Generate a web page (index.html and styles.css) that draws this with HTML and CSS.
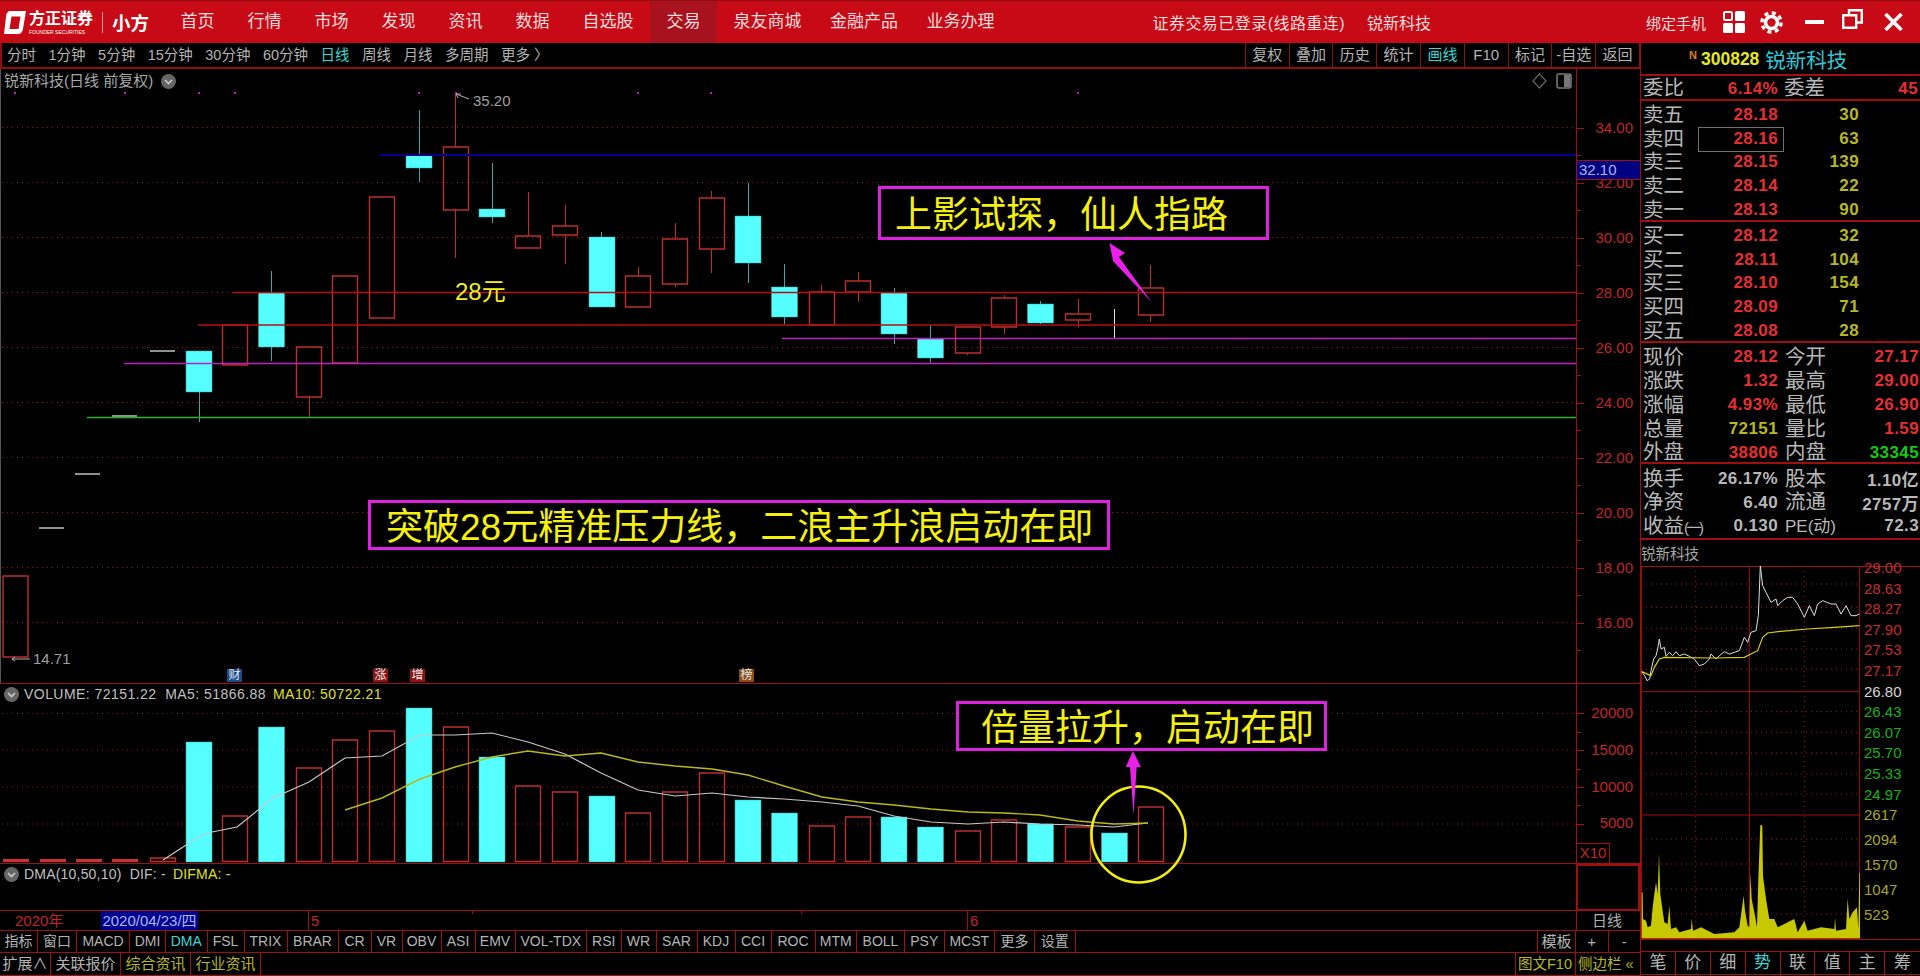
FILE: index.html
```html
<!DOCTYPE html>
<html>
<head>
	<meta charset="utf-8">
	<title>锐新科技</title>
	<link rel="stylesheet" href="styles.css">
</head>
<body>

<!-- title bar -->
<header class="titlebar">
	<div class="logo">
		<svg class="logo-mark" width="24" height="25" viewBox="0 0 24 25">
			<path fill="#fff" fill-rule="evenodd" d="M6 1H23L20 19Q19 24 15 24H1L3 7Q3 3 6 1ZM8.5 6.5L6.5 19H15.5L17.5 6.5Z"/>
		</svg>
		<div class="logo-name">
			<b>方正证券</b>
			<small>FOUNDER SECURITIES</small>
		</div>
		<i class="logo-sep"></i>
		<b class="logo-app">小方</b>
	</div>
	<nav class="menu">
		<a>首页</a><a>行情</a><a>市场</a><a>发现</a><a>资讯</a><a>数据</a><a>自选股</a><a class="on">交易</a><a>泉友商城</a><a class="tight">金融产品</a><a class="tight">业务办理</a>
	</nav>
	<span class="login">证券交易已登录(线路重连)</span>
	<span class="login-stock">锐新科技</span>
	<span class="bind">绑定手机</span>
	<svg class="win-icon grid-icon" width="22" height="22" viewBox="0 0 22 22">
		<rect x="1" y="1" width="8" height="8" rx="1.5" fill="none" stroke="#fff" stroke-width="2"/>
		<rect x="12" y="0" width="10" height="10" rx="1.5" fill="#fff"/>
		<rect x="0" y="12" width="10" height="10" rx="1.5" fill="#fff"/>
		<rect x="12" y="12" width="10" height="10" rx="1.5" fill="#fff"/>
	</svg>
	<svg class="win-icon gear-icon" width="23" height="23" viewBox="0 0 23 23">
		<circle cx="11.5" cy="11.5" r="6" fill="none" stroke="#fff" stroke-width="3.6"/>
		<circle cx="11.5" cy="11.5" r="9.6" fill="none" stroke="#fff" stroke-width="3.4" stroke-dasharray="4 3.54"/>
	</svg>
	<svg class="win-icon min-icon" width="19" height="4" viewBox="0 0 19 4"><rect width="19" height="4" fill="#fff"/></svg>
	<svg class="win-icon max-icon" width="21" height="20" viewBox="0 0 21 20">
		<path fill="none" stroke="#fff" stroke-width="2.4" d="M1.2 6.2H14.2V18.8H1.2ZM7 6V1.2H19.8V13.5H14.2"/>
	</svg>
	<svg class="win-icon close-icon" width="19" height="18" viewBox="0 0 19 18">
		<path stroke="#fff" stroke-width="3.6" d="M1.5 1L17.5 17M17.5 1L1.5 17"/>
	</svg>
</header>

<div class="main">
	<div class="left">

		<!-- period toolbar -->
		<div class="toolbar">
			<div class="periods">
				<a>分时</a><a>1分钟</a><a>5分钟</a><a>15分钟</a><a>30分钟</a><a>60分钟</a><a class="cyan">日线</a><a>周线</a><a>月线</a><a>多周期</a><a>更多 〉</a>
			</div>
			<div class="tools">
				<a>复权</a><a>叠加</a><a>历史</a><a>统计</a><a class="cyan">画线</a><a>F10</a><a>标记</a><a>-自选</a><a>返回</a>
			</div>
		</div>

		<!-- price pane -->
		<section class="pane price-pane">
			<div class="plot">
				<svg class="layer" width="1576" height="614" viewBox="0 69 1576 614">
					<g class="grid">
						<path d="M2 127.5H1576M2 182.5H1576M2 237.5H1576M2 292.5H1576M2 347.5H1576M2 402.5H1576M2 457.5H1576M2 512.5H1576M2 567.5H1576M2 622.5H1576"/>
					</g>
					<g class="marks">
						<rect x="14" y="92" width="2" height="2"/><rect x="124" y="92" width="2" height="2"/><rect x="198" y="92" width="2" height="2"/><rect x="234" y="92" width="2" height="2"/><rect x="418" y="92" width="2" height="2"/><rect x="455" y="92" width="2" height="2"/><rect x="637" y="92" width="2" height="2"/><rect x="710" y="92" width="2" height="2"/><rect x="1077" y="92" width="2" height="2"/>
					</g>
					<!-- bodies and wicks -->
					<path class="up" d="M3 576h25v81h-25zM222.5 325h25v40h-25zM296.5 347h25v50h-25zM332.5 276h25v87h-25zM369.5 197h25v121h-25zM443.5 147h25v63h-25zM515.5 236h25v12h-25zM552.5 226h25v9h-25zM625.5 276h25v31h-25zM662.5 239h25v45h-25zM699.5 198h25v51h-25zM809.5 292h25v33h-25zM845.5 281h25v11h-25zM955.5 327h25v26h-25zM991.5 298h25v29h-25zM1065.5 314h25v6h-25zM1138.5 288h25v27h-25z"/>
					<path class="up-wick" d="M309.5 397V417M455.5 94V147M455.5 210V258M528.5 192V236M565.5 205V226M565.5 235V264M638.5 267V276M675.5 223V239M675.5 284V287M711.5 191V198M711.5 249V273M821.5 285V292M858.5 272V281M858.5 292V302M967.5 353V355M1004.5 295V298M1004.5 327V334M1078.5 299V314M1078.5 320V327M1150.5 265V288M1150.5 315V322"/>
					<path class="dn-wick" d="M199.5 392V422M271.5 271V293M271.5 347V361M419.5 110V155M419.5 168V182M492.5 163V209M492.5 217V223M601.5 232V237M748.5 183V216M748.5 263V283M784.5 264V287M784.5 317V324M894.5 288V293M894.5 334V344M930.5 325V339M930.5 358V363M1040.5 301V304M1040.5 323V324"/>
					<path class="dn" d="M186 351h26v41h-26zM258.5 293h26v54h-26zM406 155h26v13h-26zM479 209h26v8h-26zM589 237h26v70h-26zM735 216h26v47h-26zM771.5 287h26v30h-26zM881 293h26v41h-26zM917.5 339h26v19h-26zM1027.5 304h26v19h-26z"/>
					<path class="flat" d="M39 528H64M75 474H100M112 416H137M150 351H175"/>
					<path class="flat-thin" d="M1114.5 309V338"/>
					<!-- drawn lines -->
					<path class="ln-blue" d="M380 155H1576"/>
					<path class="ln-red" d="M233 292.5H1576M198 325H1576"/>
					<path class="ln-pink" d="M782 338.5H1576M124 363.5H1576"/>
					<path class="ln-green" d="M87 417.5H1576"/>
					<path class="arrow" d="M1109.5 243L1125 253L1119 257L1151.5 302L1113 261Z"/>
					<path class="pointer" d="M456 94L469 99M456 94L458 98M456 94L461 94M12 659H30M12 659L15 657M12 659L15 661"/>
				</svg>

				<div class="pane-title">
					<span>锐新科技(日线 前复权)</span>
					<svg class="chev" width="15" height="15" viewBox="0 0 15 15"><circle cx="7.5" cy="7.5" r="7.5" fill="#666"/><path d="M4 6L7.5 9.5L11 6" fill="none" stroke="#ccc" stroke-width="1.6"/></svg>
				</div>
				<svg class="pane-icons" width="44" height="18" viewBox="0 0 44 18">
					<path d="M7.5 2L14 9L7.5 16L1 9Z" fill="none" stroke="#666" stroke-width="1.2"/>
					<rect x="25" y="2" width="14" height="14" rx="2" fill="none" stroke="#777" stroke-width="1.6"/>
					<rect x="32" y="3" width="6" height="12" fill="#777"/>
				</svg>

				<span class="price-tag high">35.20</span>
				<span class="price-tag low">14.71</span>
				<span class="note-small">28元</span>

				<div class="note note-a">上影试探，仙人指路</div>
				<div class="note note-b">突破28元精准压力线，二浪主升浪启动在即</div>

				<span class="event ev-blue ev-1">财</span>
				<span class="event ev-red ev-2">涨</span>
				<span class="event ev-red ev-3">增</span>
				<span class="event ev-brown ev-4">榜</span>
			</div>
			<div class="axis axis-price">
				<span>34.00</span><span>32.00</span><span>30.00</span><span>28.00</span><span>26.00</span><span>24.00</span><span>22.00</span><span>20.00</span><span>18.00</span><span>16.00</span>
				<b class="last-tag">32.10</b>
			</div>
		</section>

		<!-- volume pane -->
		<section class="pane vol-pane">
			<div class="plot">
				<svg class="layer over" width="1576" height="179" viewBox="0 684 1576 179">
					<g class="grid"><path d="M2 713.5H1576M2 750H1576M2 787H1576M2 824H1576"/></g>
					<path class="dn-flat" d="M3 859h26v3h-26zM40 859h26v3h-26zM76 859h26v3h-26zM112 859h26v3h-26z"/>
					<path class="up" d="M150.5 858h25v3.5h-25zM222.5 816h25v45.5h-25zM296.5 768h25v93.5h-25zM332.5 740h25v121.5h-25zM369.5 731h25v130.5h-25zM443.5 727h25v134.5h-25zM515.5 786h25v75.5h-25zM552.5 792h25v69.5h-25zM625.5 813h25v48.5h-25zM662.5 792h25v69.5h-25zM699.5 773h25v88.5h-25zM809.5 826h25v35.5h-25zM845.5 817h25v44.5h-25zM955.5 831h25v30.5h-25zM991.5 820h25v41.5h-25zM1065.5 827h25v34.5h-25zM1138.5 807h25v54.5h-25z"/>
					<path class="dn" d="M186 742h26v120h-26zM258.5 727h26v135h-26zM406 708h26v154h-26zM479 757h26v105h-26zM589 796h26v66h-26zM735 800h26v62h-26zM771.5 813h26v49h-26zM881 817h26v45h-26zM917.5 827h26v35h-26zM1027.5 824h26v38h-26zM1101.5 833h26v29h-26z"/>
					<polyline class="ma5" points="163,860 200,836 212,832 237,827 273,798 309,782 345,758 382,756 420,735 455,735 492,733 528,742 565,754 601,773 638,790 675,796 712,793 748,797 784,799 822,802 858,806 894,816 931,822 968,824 1004,822 1040,824 1078,825 1114,827 1148,823"/>
					<polyline class="ma10" points="345,810 382,798 420,779 455,767 492,757 528,751 565,756 601,753 638,762 675,766 712,769 748,775 784,786 822,797 858,802 894,805 931,809 968,812 1004,813 1040,815 1078,821 1114,824 1148,823"/>
					<ellipse class="ring" cx="1138.5" cy="834.5" rx="47" ry="48"/>
					<path class="arrow" d="M1133 751L1141 767L1136.7 767L1133.5 815L1130 767L1125.7 767Z"/>
				</svg>
				<div class="pane-title vol-title">
					<svg class="chev" width="15" height="15" viewBox="0 0 15 15"><circle cx="7.5" cy="7.5" r="7.5" fill="#666"/><path d="M4 6L7.5 9.5L11 6" fill="none" stroke="#ccc" stroke-width="1.6"/></svg>
					<span>VOLUME: 72151.22&nbsp; MA5: 51866.88</span>
					<span class="yel">MA10: 50722.21</span>
				</div>
				<div class="note note-c">倍量拉升，启动在即</div>
			</div>
			<div class="axis axis-vol">
				<span>20000</span><span>15000</span><span>10000</span><span>5000</span>
				<b class="x10">X10</b>
			</div>
		</section>

		<!-- dma pane -->
		<section class="pane dma-pane">
			<div class="plot">
				<div class="pane-title vol-title dma-title">
					<svg class="chev" width="15" height="15" viewBox="0 0 15 15"><circle cx="7.5" cy="7.5" r="7.5" fill="#666"/><path d="M4 6L7.5 9.5L11 6" fill="none" stroke="#ccc" stroke-width="1.6"/></svg>
					<span>DMA(10,50,10)&nbsp; DIF: -</span>
					<span class="yel">DIFMA: -</span>
				</div>
			</div>
			<div class="axis axis-dma"></div>
		</section>

		<!-- date axis -->
		<section class="pane date-pane">
			<div class="dates">
				<span class="d-year">2020年</span>
				<span class="d-cur">2020/04/23/四</span>
				<span class="d-month d-5">5</span>
				<span class="d-month d-6">6</span>
			</div>
			<div class="date-kind">日线</div>
		</section>

		<!-- indicator tabs -->
		<div class="pane ind-row">
			<div class="inds">
				<a>指标</a><a>窗口</a><a>MACD</a><a>DMI</a><a class="cyan">DMA</a><a>FSL</a><a>TRIX</a><a>BRAR</a><a>CR</a><a>VR</a><a>OBV</a><a>ASI</a><a>EMV</a><a>VOL-TDX</a><a>RSI</a><a>WR</a><a>SAR</a><a>KDJ</a><a>CCI</a><a>ROC</a><a>MTM</a><a>BOLL</a><a>PSY</a><a>MCST</a><a>更多</a><a>设置</a>
			</div>
			<div class="ind-tail">
				<a class="tpl">模板</a><a class="pm">+</a><a class="pm">-</a>
			</div>
		</div>

		<!-- bottom bar -->
		<div class="pane bottom-row">
			<div class="ext">
				<a>扩展∧</a><a>关联报价</a><a class="olive">综合资讯</a><a class="olive">行业资讯</a>
			</div>
			<div class="ext-tail">
				<a class="olive f10">图文F10</a><a class="olive side">侧边栏 «</a>
			</div>
		</div>
	</div>

	<!-- quote panel -->
	<aside class="panel">
		<div class="q-head">
			<sup class="q-n">N</sup><span class="q-code">300828</span><span class="q-name">锐新科技</span>
		</div>
		<div class="q-ratio">
			<span class="lb">委比</span><b class="rd v1">6.14%</b><span class="lb lb2">委差</span><b class="rd v2">45</b>
		</div>
		<div class="book">
			<div class="book-row"><span class="lb">卖五</span><b class="rd">28.18</b><b class="ol">30</b></div>
			<div class="book-row cur"><span class="lb">卖四</span><b class="rd">28.16</b><b class="ol">63</b></div>
			<div class="book-row"><span class="lb">卖三</span><b class="rd">28.15</b><b class="ol">139</b></div>
			<div class="book-row"><span class="lb">卖二</span><b class="rd">28.14</b><b class="ol">22</b></div>
			<div class="book-row"><span class="lb">卖一</span><b class="rd">28.13</b><b class="ol">90</b></div>
		</div>
		<div class="book">
			<div class="book-row"><span class="lb">买一</span><b class="rd">28.12</b><b class="ol">32</b></div>
			<div class="book-row"><span class="lb">买二</span><b class="rd">28.11</b><b class="ol">104</b></div>
			<div class="book-row"><span class="lb">买三</span><b class="rd">28.10</b><b class="ol">154</b></div>
			<div class="book-row"><span class="lb">买四</span><b class="rd">28.09</b><b class="ol">71</b></div>
			<div class="book-row"><span class="lb">买五</span><b class="rd">28.08</b><b class="ol">28</b></div>
		</div>
		<div class="stats s-five">
			<span class="lb">现价</span><b class="rd">28.12</b><span class="lb">今开</span><b class="rd">27.17</b>
			<span class="lb">涨跌</span><b class="rd">1.32</b><span class="lb">最高</span><b class="rd">29.00</b>
			<span class="lb">涨幅</span><b class="rd">4.93%</b><span class="lb">最低</span><b class="rd">26.90</b>
			<span class="lb">总量</span><b class="ol">72151</b><span class="lb">量比</span><b class="rd">1.59</b>
			<span class="lb">外盘</span><b class="rd">38806</b><span class="lb">内盘</span><b class="gr">33345</b>
		</div>
		<div class="stats s-three">
			<span class="lb">换手</span><b class="gy">26.17%</b><span class="lb">股本</span><b class="gy">1.10亿</b>
			<span class="lb">净资</span><b class="gy">6.40</b><span class="lb">流通</span><b class="gy">2757万</b>
			<span class="lb">收益<i class="nar">(一)</i></span><b class="gy">0.130</b><span class="lb lb-pe">PE(动)</span><b class="gy">72.3</b>
		</div>
		<div class="mini-title">锐新科技</div>
		<div class="mini">
			<svg class="mini-chart" width="220" height="373" viewBox="120 -99 660 1119">
				<g class="mini-dots">
					<path d="M120 -45H775M120 25H775M120 88H775M120 150H775M120 210H775M120 338H775M120 400H775M120 462H775M120 525H775M120 585H775M120 720H775M120 795H775M120 870H775M120 945H775M284 -99V1017M610 -99V1017"/>
				</g>
				<path class="mini-solid" d="M120 278H775M120 648H775M445 -99V1017M121 -99V1017M776 -99V1017M120 1018H780"/>
				<polygon class="mini-vol" points="122,880 125,880 126,960 135,965 140,985 150,980 155,925 160,885 165,850 170,885 174,763 178,885 185,935 190,970 200,975 205,920 210,990 225,985 235,1000 270,990 272,958 276,995 300,985 340,1005 400,1000 415,985 428,890 432,935 440,980 445,985 448,820 452,900 462,950 468,985 472,840 478,677 484,680 486,830 495,900 505,960 520,960 530,985 560,970 580,960 590,1000 610,965 620,995 660,985 700,990 702,955 705,995 735,990 740,898 745,960 755,940 768,925 772,990 775,822 777,822 777,1018 122,1018"/>
				<polyline class="mini-price" points="122,218 132,232 138,245 146,240 150,215 158,180 165,170 170,150 175,120 180,150 190,145 195,172 205,160 215,170 225,158 235,170 250,165 265,172 280,180 295,200 310,195 325,180 330,165 345,180 355,170 370,158 385,165 400,160 415,155 430,115 440,130 450,100 465,95 472,50 478,-99 485,-40 495,-20 510,10 525,0 530,20 545,5 560,-5 575,-5 590,15 610,55 625,20 640,50 650,15 665,5 690,15 705,15 720,45 735,20 750,50 765,50 775,45"/>
				<polyline class="mini-avg" points="122,218 150,230 160,205 175,180 190,175 340,177 430,175 470,155 485,115 500,102 540,97 620,90 700,85 775,80"/>
			</svg>
			<div class="mini-scale">
				<span class="rd2">29.00</span><span class="rd2">28.63</span><span class="rd2">28.27</span><span class="rd2">27.90</span><span class="rd2">27.53</span><span class="rd2">27.17</span><span class="wh">26.80</span><span class="gr2">26.43</span><span class="gr2">26.07</span><span class="gr2">25.70</span><span class="gr2">25.33</span><span class="gr2 last-green">24.97</span>
				<span class="ol2">2617</span><span class="ol2">2094</span><span class="ol2">1570</span><span class="ol2">1047</span><span class="ol2">523</span>
			</div>
		</div>
		<div class="side-tabs">
			<a>笔</a><a>价</a><a>细</a><a class="cyan">势</a><a>联</a><a>值</a><a>主</a><a>筹</a>
		</div>
	</aside>
</div>

</body>
</html>
```

FILE: styles.css
```css
* {
	box-sizing: border-box;
}
html, body {
	margin: 0;
	padding: 0;
	width: 1920px;
	height: 976px;
	overflow: hidden;
	background-color: #000;
	color: #b4b4b4;
	font-family: "Liberation Sans", "Noto Sans CJK SC", sans-serif;
}
a {
	display: block;
	white-space: nowrap;
}
.cyan {
	color: #3fd4d4;
}
.olive {
	color: #b8b820;
}

/* title bar */
.titlebar {
	display: flex;
	align-items: center;
	height: 43px;
	background-color: #c70a16;
	border-top: 1px solid #8e0d10;
	color: #f0dcdc;
}
.logo {
	display: flex;
	align-items: center;
	width: 164px;
	flex-shrink: 0;
	padding-left: 3px;
	color: #fff;
}
.logo-mark {
	margin-right: 2px;
}
.logo-name {
	display: flex;
	flex-direction: column;
	width: 66px;
	line-height: 1;
}
.logo-name b {
	font-size: 16px;
	line-height: 18px;
	letter-spacing: 0;
}
.logo-name small {
	font-size: 5px;
	line-height: 6px;
	white-space: nowrap;
	margin-top: 1px;
}
.logo-sep {
	width: 1px;
	height: 21px;
	margin: 0 9px 0 7px;
	background-color: #e8a0a0;
}
.logo-app {
	font-size: 18.5px;
	letter-spacing: 0;
}
.menu {
	display: flex;
	height: 42px;
}
.menu a {
	padding: 0 16.5px;
	font-size: 17px;
	line-height: 42px;
}
.menu a.on {
	background-color: #a8121e;
}
.menu a.tight {
	margin-left: -4.5px;
}
.login {
	margin-left: 141.5px;
	font-size: 16px;
	letter-spacing: 0.45px;
}
.login-stock {
	margin-left: 22px;
	font-size: 16px;
}
.bind {
	margin-left: 215px;
	font-size: 15px;
}
.win-icon {
	flex-shrink: 0;
}
.grid-icon {
	margin-left: 17px;
}
.gear-icon {
	margin-left: 15px;
}
.min-icon {
	margin-left: 22px;
}
.max-icon {
	margin-left: 18px;
	margin-top: -6px;
}
.close-icon {
	margin-left: 21px;
}

/* layout */
.main {
	display: flex;
	height: 933px;
}
.left {
	width: 1640px;
	flex-shrink: 0;
	display: flex;
	flex-direction: column;
}

/* toolbar */
.toolbar {
	display: flex;
	justify-content: space-between;
	height: 26px;
	border-bottom: 2px solid #8e0f0f;
	border-left: 2px solid #8e0f0f;
	font-size: 14.5px;
	line-height: 24px;
}
.periods {
	display: flex;
	gap: 12.5px;
	padding-left: 5px;
}
.tools {
	display: flex;
	border-left: 1px solid #8e0f0f;
}
.tools a {
	width: 43.8px;
	text-align: center;
	border-right: 1px solid #8e0f0f;
	font-size: 15px;
}

/* panes */
.pane {
	display: flex;
	flex-shrink: 0;
	border-bottom: 1px solid #a00f0f;
}
.plot {
	position: relative;
	flex: 1;
	min-width: 0;
}
.layer {
	display: block;
}
.over {
	overflow: visible;
	position: relative;
	z-index: 1;
}
.price-pane {
	height: 615px;
}
.price-pane .plot {
	box-shadow: inset 1px 0 #555;
}
.vol-pane {
	height: 180px;
}
.dma-pane {
	height: 47px;
}
.date-pane {
	height: 20px;
}
.ind-row {
	height: 22px;
}
.bottom-row {
	height: 23px;
}
.axis {
	position: relative;
	width: 64px;
	flex-shrink: 0;
	border-left: 1px solid #a00f0f;
	color: #c02626;
	font-size: 15px;
	text-align: right;
}
.axis span {
	position: relative;
	display: block;
	padding-right: 7px;
}
.axis span::before {
	content: "";
	position: absolute;
	left: 0;
	top: 50%;
	width: 7px;
	height: 1px;
	background-color: #a00f0f;
}
.axis span::after {
	content: "";
	position: absolute;
	left: 0;
	top: 100%;
	width: 4px;
	height: 1px;
	background-color: #a00f0f;
}
.axis-price {
	padding-top: 31px;
}
.axis-price span {
	height: 55px;
	line-height: 55px;
}
.axis-vol {
	padding-top: 11px;
}
.axis-vol span {
	height: 36.8px;
	line-height: 36.8px;
}
.axis-vol span:last-of-type::after {
	display: none;
}
.last-tag {
	position: absolute;
	left: 0;
	top: 91px;
	width: 63px;
	height: 20px;
	padding-left: 2px;
	background-color: #000080;
	border-top: 1px solid #a00f0f;
	border-bottom: 1px solid #a00f0f;
	color: #a8b8f8;
	font-size: 15px;
	font-weight: normal;
	letter-spacing: 0;
	line-height: 18px;
	text-align: left;
}
.x10 {
	position: absolute;
	left: 0;
	bottom: 0;
	width: 33px;
	height: 20px;
	border-right: 1px solid #a00f0f;
	border-top: 1px solid #a00f0f;
	font-weight: normal;
	font-size: 15px;
	letter-spacing: 0;
	line-height: 18px;
	text-align: center;
}
.axis-dma {
	border: 2px solid #a00f0f;
	border-bottom-width: 1px;
}

/* pane titles */
.pane-title {
	position: absolute;
	left: 4px;
	top: 3px;
	display: flex;
	align-items: center;
	gap: 8px;
	font-size: 15px;
	line-height: 18px;
	color: #a8a8a8;
}
.vol-title {
	top: 1px;
	z-index: 2;
	font-size: 14px;
	gap: 5px;
	letter-spacing: 0.45px;
	color: #c0c0c0;
}
.dma-title {
	letter-spacing: 0.2px;
}
.chev {
	flex-shrink: 0;
}
.yel {
	margin-left: 2px;
	color: #e0e020;
}
.pane-icons {
	position: absolute;
	left: 1532px;
	top: 3px;
}

/* chart drawing */
.grid path {
	fill: none;
	stroke: #a01212;
	stroke-width: 1;
	stroke-dasharray: 1 4;
}
.marks rect {
	fill: #d010d0;
}
.up {
	fill: none;
	stroke: #bb2e2e;
	stroke-width: 1.4;
}
.up-wick {
	fill: none;
	stroke: #c42a2a;
	stroke-width: 1;
}
.dn-wick {
	fill: none;
	stroke: #3ba8a8;
	stroke-width: 1;
}
.dn {
	fill: #55ffff;
	stroke: #2fb0b0;
	stroke-width: 0.5;
}
.dn-flat {
	fill: #c83232;
}
.flat {
	fill: none;
	stroke: #c0c0c0;
	stroke-width: 1.6;
}
.flat-thin {
	fill: none;
	stroke: #e0e0e0;
	stroke-width: 1;
}
.ln-blue {
	stroke: #000090;
	stroke-width: 2;
}
.ln-red {
	stroke: #b50f12;
	stroke-width: 1.5;
}
.ln-pink {
	stroke: #c020c0;
	stroke-width: 1.5;
}
.ln-green {
	stroke: #24b030;
	stroke-width: 1.5;
}
.arrow {
	fill: #ea1fea;
}
.pointer {
	fill: none;
	stroke: #aaa;
	stroke-width: 1;
}
.ma5 {
	fill: none;
	stroke: #c8c8c8;
	stroke-width: 1.2;
}
.ma10 {
	fill: none;
	stroke: #b8b818;
	stroke-width: 1.4;
}
.ring {
	fill: none;
	stroke: #f0ee10;
	stroke-width: 2.6;
}
.price-tag {
	position: absolute;
	font-size: 15px;
	line-height: 18px;
	color: #a0a0a0;
}
.high {
	left: 473px;
	top: 23px;
}
.low {
	left: 33px;
	top: 581px;
}
.note-small {
	position: absolute;
	left: 455px;
	top: 208px;
	font-size: 24px;
	line-height: 30px;
	color: #f4ee20;
}

/* yellow captions */
.note {
	position: absolute;
	display: flex;
	align-items: center;
	height: 52px;
	padding-bottom: 3px;
	border: 3px solid #e020e0;
	font-size: 37px;
	white-space: nowrap;
	color: #f6f010;
	background-color: #000;
}
.note-a {
	left: 878px;
	top: 117px;
	width: 391px;
	height: 54px;
	padding-left: 14px;
}
.note-b {
	left: 368px;
	top: 431px;
	width: 742px;
	height: 50px;
	padding-left: 15px;
}
.note-c {
	z-index: 2;
	left: 956px;
	top: 17px;
	width: 371px;
	height: 50px;
	padding-left: 22px;
}

/* event flags */
.event {
	position: absolute;
	top: 600px;
	width: 15px;
	height: 13px;
	font-size: 12px;
	line-height: 13px;
	text-align: center;
	color: #e8e8e8;
}
.ev-blue {
	background-color: #1a4c90;
}
.ev-red {
	background-color: #8c1414;
}
.ev-brown {
	background-color: #8c4c14;
}
.ev-1 {
	left: 227px;
}
.ev-2 {
	left: 373px;
}
.ev-3 {
	left: 410px;
}
.ev-4 {
	left: 739px;
}

/* dates */
.dates {
	display: flex;
	align-items: stretch;
	flex: 1;
	font-size: 15px;
	line-height: 19px;
	color: #c02626;
	background: linear-gradient(#a00f0f, #a00f0f) 472px 0 / 1px 3px no-repeat, linear-gradient(#a00f0f, #a00f0f) 801px 0 / 1px 3px no-repeat;
}
.d-year {
	margin-left: 15px;
	width: 86px;
}
.d-cur {
	width: 97px;
	background-color: #000090;
	color: #a8b8f8;
	font-size: 15px;
	text-align: center;
	white-space: nowrap;
}
.d-month {
	padding-left: 2px;
	border-left: 1px solid #a00f0f;
}
.d-5 {
	margin-left: 110px;
	width: 659px;
}
.date-kind {
	width: 64px;
	flex-shrink: 0;
	border-left: 1px solid #a00f0f;
	font-size: 15px;
	line-height: 19px;
	padding-left: 15px;
	color: #b0b0b0;
}

/* indicator tabs */
.inds {
	display: grid;
	grid-template-columns: 38px 39px 53px 36px 41.5px 37px 43px 51px 33px 31px 39px 34px 40px 71.5px 34.5px 35px 41px 38px 36px 44px 41.5px 48px 39.5px 50.5px 40px 40.5px;
	flex-shrink: 0;
	width: 1075.5px;
	font-size: 14px;
	line-height: 21px;
	text-align: center;
}
.inds a {
	border-right: 1px solid #a00f0f;
}
.ind-tail {
	display: flex;
	margin-left: auto;
	font-size: 15px;
	line-height: 21px;
	text-align: center;
}
.tpl {
	width: 38px;
	border-left: 1px solid #a00f0f;
}
.pm {
	width: 32.5px;
	border-left: 1px solid #a00f0f;
}

/* bottom bar */
.ext {
	display: flex;
	font-size: 15px;
	line-height: 22px;
}
.ext a {
	border-right: 1px solid #a00f0f;
	text-align: center;
}
.ext a:nth-child(1) {
	width: 51px;
}
.ext a:nth-child(2),
.ext a:nth-child(3),
.ext a:nth-child(4) {
	width: 70px;
}
.ext-tail {
	display: flex;
	margin-left: auto;
	font-size: 14.5px;
	line-height: 22px;
}
.f10 {
	width: 60px;
	padding-left: 2px;
	border-left: 1px solid #a00f0f;
}
.side {
	width: 65px;
	padding-left: 2px;
	border-left: 1px solid #a00f0f;
}

/* quote panel */
.panel {
	width: 280px;
	flex-shrink: 0;
	border-left: 1px solid #a00f0f;
	display: flex;
	flex-direction: column;
}
.q-head {
	display: flex;
	align-items: center;
	height: 33px;
	padding-left: 48px;
	padding-top: 1px;
	border-bottom: 2px solid #a00f0f;
}
.q-n {
	align-self: flex-start;
	margin: 6px 4px 0 0;
	font-size: 11px;
	font-weight: bold;
	line-height: 10px;
	color: #d88020;
}
.q-code {
	font-size: 17.5px;
	font-weight: bold;
	color: #e8e820;
}
.q-name {
	margin-left: 6px;
	font-size: 20.5px;
	color: #30c8d8;
}
.lb {
	font-size: 20.5px;
	line-height: 1;
	padding-left: 2px;
	color: #b8b8b8;
	white-space: nowrap;
}
.nar {
	font-size: 15px;
	font-style: normal;
	letter-spacing: -2.5px;
}
.lb-pe {
	font-size: 17px;
}
.rd {
	color: #e63030;
}
.ol {
	color: #b8b820;
}
.gr {
	color: #14c814;
}
.gy {
	color: #b8b8b8;
}
b {
	font-size: 17px;
	font-weight: bold;
	letter-spacing: 0.4px;
	white-space: nowrap;
}
.q-ratio {
	display: grid;
	grid-template-columns: 137px 6px 42px 94px;
	align-items: center;
	height: 25px;
	padding-top: 2px;
	border-bottom: 2px solid #a00f0f;
}
.q-ratio .lb:first-child {
	grid-column: 1;
	grid-row: 1;
}
.v1 {
	grid-column: 1;
	grid-row: 1;
	text-align: right;
}
.lb2 {
	grid-column: 3;
	padding-left: 0;
}
.v2 {
	grid-column: 4;
	text-align: right;
	padding-right: 2px;
}
.book {
	padding-top: 2px;
	height: 121px;
	border-bottom: 2px solid #a00f0f;
}
.book-row {
	position: relative;
	display: grid;
	grid-template-columns: 137px 81px;
	align-items: center;
	height: 23.7px;
	text-align: right;
}
.book-row .lb {
	position: absolute;
	left: 0;
	top: 2px;
	text-align: left;
}
.book-row b:nth-of-type(1) {
	grid-column: 1;
}
.book-row b:nth-of-type(2) {
	grid-column: 2;
}
.cur::after {
	content: "";
	position: absolute;
	left: 57px;
	top: 0;
	width: 84px;
	height: 23px;
	border: 1px solid #707070;
}
.stats {
	display: grid;
	grid-template-columns: 60px 77px 63px 78px;
	grid-auto-rows: 23.8px;
	align-items: center;
	border-bottom: 2px solid #a00f0f;
}
.stats b {
	text-align: right;
}
.stats .lb:nth-child(4n+3) {
	padding-left: 7px;
}
.s-five {
	height: 121px;
	padding-top: 2.5px;
}
.s-three {
	height: 76px;
	padding-top: 3px;
}
.mini-title {
	height: 26px;
	font-size: 14.5px;
	line-height: 28px;
	color: #a8a8a8;
}
.mini {
	display: flex;
	height: 374px;
	border-top: 1px solid #a00f0f;
	border-bottom: 1px solid #a00f0f;
}
.mini-chart {
	display: block;
	flex-shrink: 0;
	margin-top: -1px;
}
.mini-dots path {
	fill: none;
	stroke: #b01414;
	stroke-width: 3;
	stroke-dasharray: 3 12;
}
.mini-solid {
	fill: none;
	stroke: #a00f0f;
	stroke-width: 3;
}
.mini-vol {
	fill: #c8c800;
}
.mini-price {
	fill: none;
	stroke: #e0e0e0;
	stroke-width: 3;
}
.mini-avg {
	fill: none;
	stroke: #d8d010;
	stroke-width: 3.6;
}
.mini-scale {
	display: flex;
	flex-direction: column;
	flex: 1;
	padding: 0 0 0 3px;
	margin-top: -9px;
	font-size: 15px;
}
.mini-scale span {
	display: block;
	height: 20.6px;
	line-height: 20.6px;
}
.mini-scale .ol2 {
	height: 25px;
	line-height: 25px;
	color: #a8a818;
}
.mini-scale .last-green {
	margin-bottom: -3px;
}
.rd2 {
	color: #c82a2a;
}
.wh {
	color: #d8d8d8;
}
.gr2 {
	color: #14b414;
}
.side-tabs {
	display: grid;
	grid-template-columns: repeat(8, 1fr);
	height: 24px;
	margin-top: 11px;
	border-top: 1px solid #a00f0f;
	border-bottom: 1px solid #a00f0f;
	font-size: 17px;
	line-height: 22px;
	text-align: center;
}
.side-tabs a {
	border-right: 1px solid #a00f0f;
}
.side-tabs a:last-child {
	border-right: none;
}
```
